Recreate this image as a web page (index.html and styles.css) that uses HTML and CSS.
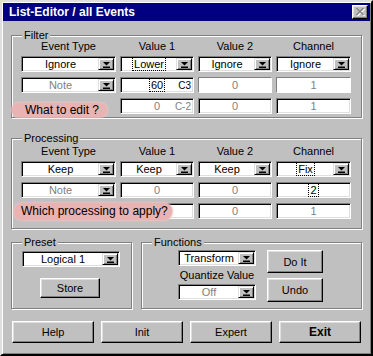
FILE: index.html
```html
<!DOCTYPE html>
<html lang="en">
<head>
    <meta charset="UTF-8">
    <title>List-Editor / all Events</title>
    <link rel="stylesheet" href="styles.css">
</head>
<body>
    <div class="window">
        <div class="titlebar">
            <span>List-Editor / all Events</span>
            <span class="close">
                <svg width="9" height="8" viewBox="0 0 9 8">
                    <path d="M1.5 1 L8.5 8 M8.5 1 L1.5 8" stroke="#fff" stroke-width="1.4"/>
                    <path d="M0.5 0 L7.5 7 M7.5 0 L0.5 7" stroke="#808080" stroke-width="1.4"/>
                </svg>
            </span>
        </div>

        <div class="client">
            <!-- Filter -->
            <div class="group filter">
                <span class="caption">Filter</span>
                <div class="grid">
                    <div class="head">Event Type</div>
                    <div class="head">Value 1</div>
                    <div class="head">Value 2</div>
                    <div class="head">Channel</div>

                    <div class="combo"><span class="text">Ignore</span><span class="drop"><svg width="7" height="7"><polygon points="0,1 7,1 3.5,4.5"/><rect x="0" y="5.5" width="7" height="1.5"/></svg></span></div>
                    <div class="combo"><span class="text"><span class="focus">Lower</span></span><span class="drop"><svg width="7" height="7"><polygon points="0,1 7,1 3.5,4.5"/><rect x="0" y="5.5" width="7" height="1.5"/></svg></span></div>
                    <div class="combo"><span class="text">Ignore</span><span class="drop"><svg width="7" height="7"><polygon points="0,1 7,1 3.5,4.5"/><rect x="0" y="5.5" width="7" height="1.5"/></svg></span></div>
                    <div class="combo"><span class="text">Ignore</span><span class="drop"><svg width="7" height="7"><polygon points="0,1 7,1 3.5,4.5"/><rect x="0" y="5.5" width="7" height="1.5"/></svg></span></div>

                    <div class="combo off"><span class="text">Note</span><span class="drop"><svg width="7" height="7"><polygon points="0,1 7,1 3.5,4.5"/><rect x="0" y="5.5" width="7" height="1.5"/></svg></span></div>
                    <div class="edit"><span class="focus">60</span><span class="note">C3</span></div>
                    <div class="edit dim">0</div>
                    <div class="edit dim">1</div>

                    <div class="edit off r4 c2">0<span class="note">C-2</span></div>
                    <div class="edit off r4 c3">0</div>
                    <div class="edit off r4 c4">1</div>
                    <div class="hint r4 c1 small-hint">What to edit ?</div>
                </div>
            </div>

            <!-- Processing -->
            <div class="group processing">
                <span class="caption">Processing</span>
                <div class="grid">
                    <div class="head">Event Type</div>
                    <div class="head">Value 1</div>
                    <div class="head">Value 2</div>
                    <div class="head">Channel</div>

                    <div class="combo"><span class="text">Keep</span><span class="drop"><svg width="7" height="7"><polygon points="0,1 7,1 3.5,4.5"/><rect x="0" y="5.5" width="7" height="1.5"/></svg></span></div>
                    <div class="combo"><span class="text">Keep</span><span class="drop"><svg width="7" height="7"><polygon points="0,1 7,1 3.5,4.5"/><rect x="0" y="5.5" width="7" height="1.5"/></svg></span></div>
                    <div class="combo"><span class="text">Keep</span><span class="drop"><svg width="7" height="7"><polygon points="0,1 7,1 3.5,4.5"/><rect x="0" y="5.5" width="7" height="1.5"/></svg></span></div>
                    <div class="combo"><span class="text"><span class="focus">Fix</span></span><span class="drop"><svg width="7" height="7"><polygon points="0,1 7,1 3.5,4.5"/><rect x="0" y="5.5" width="7" height="1.5"/></svg></span></div>

                    <div class="combo off"><span class="text">Note</span><span class="drop"><svg width="7" height="7"><polygon points="0,1 7,1 3.5,4.5"/><rect x="0" y="5.5" width="7" height="1.5"/></svg></span></div>
                    <div class="edit off">0</div>
                    <div class="edit off">0</div>
                    <div class="edit"><span class="focus">2</span></div>

                    <div class="edit off r4 c2"></div>
                    <div class="edit off r4 c3">0</div>
                    <div class="edit off r4 c4">1</div>
                    <div class="hint r4 c1 wide-hint">Which processing to apply?</div>
                </div>
            </div>

            <div class="lower">
                <!-- Preset -->
                <div class="group preset">
                    <span class="caption">Preset</span>
                    <div class="combo preset-combo"><span class="text">Logical 1</span><span class="drop"><svg width="7" height="7"><polygon points="0,1 7,1 3.5,4.5"/><rect x="0" y="5.5" width="7" height="1.5"/></svg></span></div>
                    <button class="btn store">Store</button>
                </div>

                <!-- Functions -->
                <div class="group functions">
                    <span class="caption">Functions</span>
                    <div class="func-col">
                        <div class="combo"><span class="text">Transform</span><span class="drop"><svg width="7" height="7"><polygon points="0,1 7,1 3.5,4.5"/><rect x="0" y="5.5" width="7" height="1.5"/></svg></span></div>
                        <div class="quant">Quantize Value</div>
                        <div class="combo off"><span class="text">Off</span><span class="drop"><svg width="7" height="7"><polygon points="0,1 7,1 3.5,4.5"/><rect x="0" y="5.5" width="7" height="1.5"/></svg></span></div>
                    </div>
                    <div class="btn-col">
                        <button class="btn doit">Do It</button>
                        <button class="btn undo">Undo</button>
                    </div>
                </div>
            </div>

            <div class="buttons">
                <button class="btn">Help</button>
                <button class="btn">Init</button>
                <button class="btn">Expert</button>
                <button class="btn exit">Exit</button>
            </div>
        </div>
    </div>
</body>
</html>
```

FILE: styles.css
```css
body {
    margin: 0;
    background: #c0c0c0;
    font-family: "Liberation Sans", Arial, sans-serif;
    font-size: 11px;
    color: #000;
}
.window {
    width: 373px;
    height: 356px;
    box-sizing: border-box;
    border: 2px solid;
    border-color: #dfdfdf #000 #000 #dfdfdf;
    box-shadow: inset 1px 1px #fff, inset -1px -1px #808080;
    padding: 1px;
    background: #c0c0c0;
}
.titlebar {
    height: 18px;
    background: #000080;
    color: #fff;
    font-weight: bold;
    font-size: 12px;
    display: flex;
    align-items: center;
    justify-content: space-between;
    padding: 0 2px 0 6px;
}
.close {
    width: 16px;
    height: 14px;
    box-sizing: border-box;
    background: #c0c0c0;
    border: 1px solid;
    border-color: #fff #000 #000 #fff;
    box-shadow: inset -1px -1px #808080, inset 1px 1px #dfdfdf;
    display: flex;
    align-items: center;
    justify-content: center;
}
.client {
    padding: 14px 8px 0 8px;
}

/* group boxes */
.group {
    position: relative;
    border: 1px solid #808080;
    box-shadow: inset 1px 1px #fff, 1px 1px #fff;
}
.caption {
    position: absolute;
    top: -7px;
    left: 10px;
    padding: 0 2px;
    line-height: 13px;
    background: #c0c0c0;
}
.filter {
    padding: 4px 9px 3px 9px;
}
.processing {
    margin-top: 20px;
    padding: 6px 9px 9px 9px;
}
.grid {
    display: grid;
    grid-template-columns: 95px 74px 74px 75px;
    grid-template-rows: auto 16px 16px 16px;
    column-gap: 4px;
    row-gap: 5px;
}
.head {
    text-align: center;
    line-height: 13px;
    margin-bottom: -2px;
}
.r4 { grid-row: 4; }
.c1 { grid-column: 1; }
.c2 { grid-column: 2; }
.c3 { grid-column: 3; }
.c4 { grid-column: 4; }

/* combo boxes and edits */
.combo, .edit {
    height: 16px;
    box-sizing: border-box;
    background: #fff;
    border: 1px solid;
    border-color: #808080 #fff #fff #808080;
    box-shadow: inset 1px 1px #000, inset -1px -1px #dfdfdf;
    padding: 1px;
    line-height: 12px;
}
.combo {
    display: flex;
}
.combo .text {
    flex: 1;
    text-align: center;
}
.drop {
    width: 16px;
    height: 12px;
    box-sizing: border-box;
    background: #c0c0c0;
    border: 1px solid;
    border-color: #dfdfdf #000 #000 #dfdfdf;
    box-shadow: inset 1px 1px #fff, inset -1px -1px #808080;
    display: flex;
    align-items: center;
    justify-content: center;
}
.drop svg {
    fill: #000;
}
.edit {
    position: relative;
    text-align: center;
}
.off {
    color: #808080;
}
.dim {
    color: #808080;
    box-shadow: none;
}
.focus {
    outline: 1px dotted #000;
    outline-offset: 0;
    padding: 0 1px;
}
.note {
    position: absolute;
    right: 2px;
    top: 2px;
    font-size: 10px;
    line-height: 11px;
}

/* pink hints */
.hint {
    position: relative;
    z-index: 1;
    align-self: start;
    justify-self: start;
    background: #e9b3b3;
    box-shadow: 0 0 2px 1px #edc0c0;
    font-size: 12px;
}
.small-hint {
    margin: 5px 0 0 -9px;
    height: 14px;
    line-height: 14px;
    border-radius: 7px;
    padding: 0 8px 0 13px;
}
.wide-hint {
    grid-column: 1 / 3;
    margin-left: -7px;
    height: 17px;
    line-height: 17px;
    border-radius: 8px;
    padding: 0 4px 0 7px;
}

/* lower groups */
.lower {
    display: flex;
    gap: 9px;
    margin-top: 13px;
}
.preset {
    width: 121px;
    box-sizing: border-box;
    padding: 8px 0 10px 10px;
}
.preset-combo {
    width: 98px;
}
.store {
    display: block;
    width: 60px;
    height: 20px;
    margin: 11px 0 0 18px;
}
.functions {
    flex: 1;
    display: flex;
    gap: 11px;
    padding: 7px 0 6px 36px;
}
.func-col {
    width: 78px;
}
.quant {
    text-align: center;
    line-height: 13px;
    margin: 3px -6px 2px;
    white-space: nowrap;
}
.btn-col {
    display: flex;
    flex-direction: column;
    width: 56px;
}
.doit {
    height: 23px;
}
.undo {
    height: 24px;
    margin-top: 5px;
}

/* push buttons */
.btn {
    box-sizing: border-box;
    background: #c0c0c0;
    border: 1px solid;
    border-color: #fff #000 #000 #fff;
    box-shadow: inset -1px -1px #808080, inset 1px 1px #dfdfdf;
    font-family: "Liberation Sans", Arial, sans-serif;
    font-size: 11px;
    color: #000;
    padding: 0;
    text-align: center;
}
.buttons {
    display: grid;
    grid-template-columns: repeat(4, 82px);
    justify-content: space-between;
    margin: 12px 1px 0 1px;
}
.buttons .btn {
    height: 22px;
}
.exit {
    font-weight: bold;
    font-size: 12px;
}
```
